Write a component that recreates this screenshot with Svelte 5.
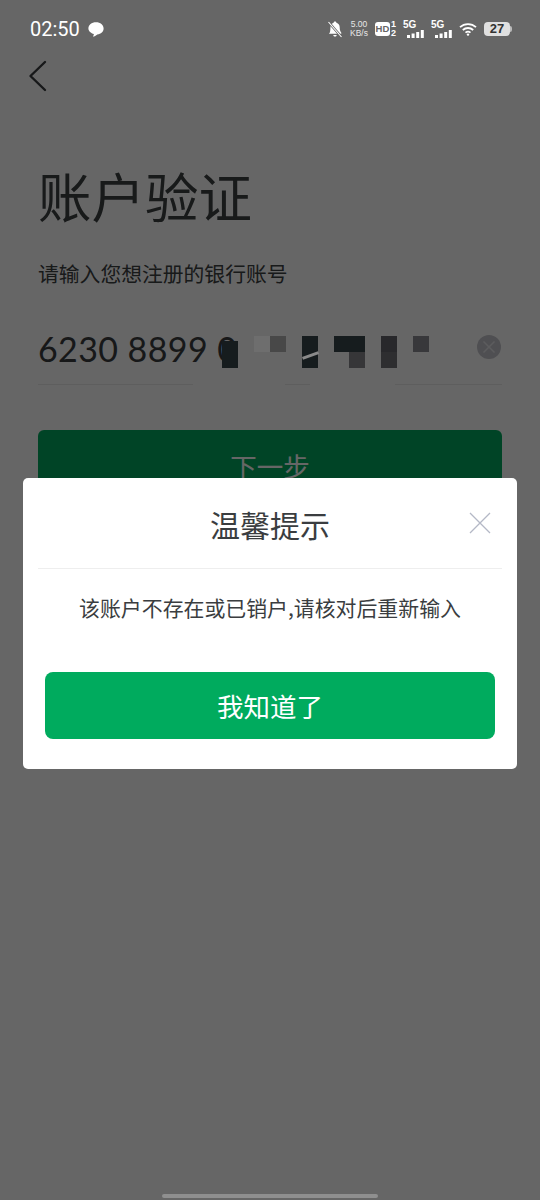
<script lang="ts">
	const mosaic = [
		{ x: 222, y: 341, w: 16, h: 27, c: '#161c1e' },
		{ x: 254, y: 336, w: 16, h: 16, c: '#6e6e6e' },
		{ x: 270, y: 336, w: 16, h: 16, c: '#484848' },
		{ x: 302, y: 336, w: 16, h: 32, c: '#161c1e' },
		{ x: 334, y: 336, w: 31, h: 16, c: '#161c1e' },
		{ x: 349, y: 352, w: 16, h: 16, c: '#363638' },
		{ x: 381, y: 336, w: 16, h: 16, c: '#28282b' },
		{ x: 381, y: 352, w: 16, h: 16, c: '#2e2e30' },
		{ x: 413, y: 336, w: 16, h: 16, c: '#38383b' }
	];
</script>

<div class="screen">
	<main class="page">
		<button class="back" aria-label="返回">
			<svg width="20" height="32" viewBox="0 0 20 32" fill="none">
				<path d="M17 2 L2.5 16 L17 30" stroke="#3a3d40" stroke-width="2.4" stroke-linecap="round" stroke-linejoin="round" />
			</svg>
		</button>
		<h1>账户验证</h1>
		<p class="hint">请输入您想注册的银行账号</p>
		<div class="field">
			<span class="number">6230 8899 0</span>
			<span class="clear">
				<svg width="24" height="24" viewBox="0 0 24 24">
					<circle cx="12" cy="12" r="12" fill="#c6c6cc" />
					<path d="M6.5 6.5 L17.5 17.5 M17.5 6.5 L6.5 17.5" stroke="#e6e6ea" stroke-width="1.5" />
				</svg>
			</span>
		</div>
		<div class="next">下一步</div>
	</main>

	<div class="scrim"></div>

	<div class="mosaic">
		<span class="gap" style="left:193px;width:92px"></span>
		<span class="gap" style="left:310px;width:85px"></span>
		{#each mosaic as m}
			<span style="left:{m.x}px;top:{m.y}px;width:{m.w}px;height:{m.h}px;background:{m.c}"></span>
		{/each}
		<i class="slash" style="left:302px;top:354px"></i>
	</div>

	<header class="status">
		<div class="status-left">
			<span class="time">02:50</span>
			<svg width="18" height="17" viewBox="0 0 18 17">
				<path d="M9 1.2c4.4 0 7.6 2.7 7.6 6.2 0 3.2-2.6 5.6-6.3 6-1.3 1.2-3 2-4.4 2.2.6-.8.9-1.6 1-2.6C4 12.100 1.400 10 1.400 7.400 1.400 3.900 4.600 1.200 9 1.200z" fill="#fff" />
			</svg>
		</div>
		<div class="status-right">
			<svg width="16" height="18" viewBox="0 0 16 18">
				<path d="M8 1.500c.8 0 1.300.5 1.400 1.200 2.200.6 3.300 2.400 3.300 4.800 0 2.400.6 4 1.600 5.200v1H3.300L2 14c1-1.300 1.400-3.500 1.400-6.300C3.400 5.100 4.500 3.300 6.600 2.700 6.700 2 7.200 1.500 8 1.500zM6.300 15h3.400c-.1 1-.8 1.600-1.700 1.600S6.400 16 6.300 15z" fill="#fff" />
				<path d="M1.500 2 L14.500 17" stroke="#666" stroke-width="2.600" />
				<path d="M1.500 2 L14.500 17" stroke="#fff" stroke-width="1.100" />
			</svg>
			<span class="speed"><b>5.00</b><b>KB/s</b></span>
			<span class="hd"><em>HD</em><span class="sims"><b>1</b><b>2</b></span></span>
			{#each [0, 1] as s}
				<span class="net">
					<b>5G</b>
					<svg width="17" height="8" viewBox="0 0 17 8">
						<rect x="0" y="5" width="3" height="3" fill="#fff" />
						<rect x="4.600" y="3.500" width="3" height="4.500" fill="#fff" />
						<rect x="9.200" y="2" width="3" height="6" fill="#fff" />
						<rect x="13.800" y="0" width="3" height="8" fill="#fff" />
					</svg>
				</span>
			{/each}
			<svg width="18" height="14" viewBox="0 0 18 14" fill="none" stroke="#fff">
				<path d="M1 5.200C5.500 1 12.500 1 17 5.200" stroke-width="1.800" />
				<path d="M3.800 8C6.800 5.300 11.200 5.300 14.200 8" stroke-width="1.800" />
				<path d="M6.500 10.600C8 9.400 10 9.400 11.500 10.600" stroke-width="1.800" />
				<circle cx="9" cy="12.600" r="1.200" fill="#fff" stroke="none" />
			</svg>
			<span class="battery"><span class="level">27</span></span>
		</div>
	</header>

	<div class="dialog">
		<div class="dialog-head">
			<h2>温馨提示</h2>
			<svg class="close" width="22" height="22" viewBox="0 0 22 22">
				<path d="M1 1 L21 21 M21 1 L1 21" stroke="#b4b8c6" stroke-width="1.300" />
			</svg>
		</div>
		<p class="message">该账户不存在或已销户,请核对后重新输入</p>
		<button class="confirm">我知道了</button>
	</div>

	<div class="home-bar"></div>
</div>

<style>
	:global(body) {
		margin: 0;
		background: #666;
	}

	.screen {
		position: relative;
		width: 540px;
		height: 1200px;
		overflow: hidden;
		background: #fff;
		font-family: "Noto Sans CJK SC", "Noto Sans", sans-serif;
	}

	.page {
		padding: 60px 38px 0;
	}

	.back {
		display: block;
		width: 20px;
		height: 32px;
		padding: 0;
		margin-left: -10px;
		border: 0;
		background: none;
	}

	h1 {
		margin: 64px 0 0;
		font-size: 53.500px;
		font-weight: 400;
		line-height: 78px;
		color: #3d4143;
	}

	.hint {
		margin: 24px 0 0;
		font-size: 20.800px;
		line-height: 30px;
		color: #3d4143;
	}

	.field {
		display: flex;
		align-items: center;
		justify-content: space-between;
		height: 71px;
		margin-top: 25px;
		margin-right: 0;
		border-bottom: 1px solid #ebebeb;
	}

	.number {
		font-family: Lato, "Open Sans", sans-serif;
		font-size: 34px;
		color: #3a3d40;
		letter-spacing: 0.4px;
	}

	.clear {
		display: flex;
		margin-top: -4px;
		margin-right: 1px;
	}

	.next {
		height: 72px;
		margin-top: 45px;
		border-radius: 6px;
		background: #00ab5e;
		color: #fff;
		font-size: 26.500px;
		line-height: 72px;
		text-align: center;
		opacity: 0.99;
	}

	.scrim {
		position: absolute;
		inset: 0;
		background: rgba(0, 0, 0, 0.6);
	}

	.mosaic span {
		position: absolute;
		display: block;
	}

	.mosaic .gap {
		top: 380px;
		height: 12px;
		background: #666;
	}

	.slash {
		position: absolute;
		width: 17px;
		height: 3px;
		background: #8a8a8a;
		transform: rotate(-20deg);
	}

	.status {
		position: absolute;
		top: 0;
		left: 0;
		right: 0;
		height: 58px;
		display: flex;
		align-items: center;
		justify-content: space-between;
		padding: 0 30px;
		color: #fff;
	}

	.status-left {
		display: flex;
		align-items: center;
		gap: 7px;
		font-family: Roboto, "Noto Sans", sans-serif;
		font-size: 20px;
	}

	.status-right {
		display: flex;
		align-items: center;
		gap: 7px;
		margin-right: 0;
		font-family: "Liberation Sans", sans-serif;
	}

	.speed {
		display: flex;
		flex-direction: column;
		align-items: center;
		font-size: 8.500px;
		line-height: 9px;
		color: #e6e6e6;
	}

	.speed b,
	.sims b,
	.net b {
		display: block;
		font-weight: 400;
	}

	.hd {
		display: flex;
		align-items: center;
		gap: 1px;
	}

	.hd em {
		display: block;
		width: 15px;
		height: 14px;
		border-radius: 3px;
		background: #fff;
		color: #666;
		font-size: 9.500px;
		font-style: normal;
		font-weight: 700;
		line-height: 14px;
		text-align: center;
	}

	.sims {
		display: flex;
		flex-direction: column;
		font-size: 9px;
		font-weight: 700;
		line-height: 9px;
	}

	.sims b {
		font-weight: 700;
	}

	.net {
		display: flex;
		flex-direction: column;
		gap: 0;
		width: 21px;
	}

	.net b {
		font-size: 10px;
		font-weight: 700;
		line-height: 10px;
	}

	.net svg {
		align-self: flex-end;
	}

	.battery {
		position: relative;
		display: block;
		width: 26px;
		height: 14px;
		border-radius: 4px;
		background: #e0e0e0;
		color: #333;
	}

	.battery::after {
		content: "";
		position: absolute;
		top: 4px;
		right: -2px;
		width: 2px;
		height: 6px;
		border-radius: 0 2px 2px 0;
		background: #bbb;
	}

	.level {
		display: block;
		font-size: 13px;
		font-weight: 700;
		line-height: 14px;
		text-align: center;
	}

	.dialog {
		position: absolute;
		top: 478px;
		left: 23px;
		width: 494px;
		height: 291px;
		border-radius: 5px;
		background: #fff;
		box-sizing: border-box;
		text-align: center;
	}

	.dialog-head {
		position: relative;
		height: 90px;
		margin: 0 15px;
		border-bottom: 1px solid #eee;
	}

	h2 {
		margin: 0;
		font-size: 30px;
		font-weight: 400;
		line-height: 92px;
		color: #3a3d40;
	}

	.close {
		position: absolute;
		top: 34px;
		right: 11px;
	}

	.message {
		margin: 23px 0 0;
		font-size: 20.900px;
		line-height: 30px;
		color: #3a3d40;
	}

	.confirm {
		display: block;
		width: 450px;
		height: 67px;
		margin: 50px auto 0;
		padding: 0;
		border: 0;
		border-radius: 8px;
		background: #00ab5e;
		color: #fff;
		font-family: inherit;
		font-size: 26.500px;
		line-height: 67px;
	}

	.home-bar {
		position: absolute;
		left: 162px;
		bottom: 2px;
		width: 216px;
		height: 4px;
		border-radius: 2px;
		background: #8f8f8f;
	}
</style>
